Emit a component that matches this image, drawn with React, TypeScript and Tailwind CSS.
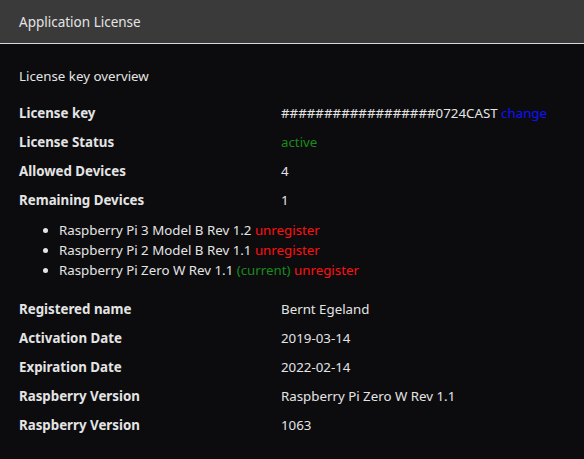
import React from "react";

interface Row {
  label: string;
  value: React.ReactNode;
}

const topRows: Row[] = [
  {
    label: "License key",
    value: (
      <>
        ##################0724CAST <span className="text-[#1010ff]">change</span>
      </>
    ),
  },
  { label: "License Status", value: <span className="text-[#1a8a1a]">active</span> },
  { label: "Allowed Devices", value: "4" },
  { label: "Remaining Devices", value: "1" },
];

const devices = [
  { name: "Raspberry Pi 3 Model B Rev 1.2", current: false },
  { name: "Raspberry Pi 2 Model B Rev 1.1", current: false },
  { name: "Raspberry Pi Zero W Rev 1.1", current: true },
];

const bottomRows: Row[] = [
  { label: "Registered name", value: "Bernt Egeland" },
  { label: "Activation Date", value: "2019-03-14" },
  { label: "Expiration Date", value: "2022-02-14" },
  { label: "Raspberry Version", value: "Raspberry Pi Zero W Rev 1.1" },
  { label: "Raspberry Version", value: "1063" },
];

const InfoRow: React.FC<Row> = ({ label, value }) => (
  <div className="flex h-[29px] items-center">
    <div className="w-[262px] shrink-0 font-bold">{label}</div>
    <div>{value}</div>
  </div>
);

const App: React.FC = () => {
  return (
    <div
      className="min-h-[459px] w-[584px] bg-[#0c0c0f] text-[13.3px] leading-5 text-[#e4e4e4]"
      style={{ fontFamily: '"Noto Sans", "Open Sans", Arial, sans-serif' }}
    >
      <div className="flex h-[44px] items-center border-b border-[#d8d8d8] bg-[#3a3a3a] px-[19px] text-[13.5px]">
        Application License
      </div>

      <div className="px-[19px] pt-[22px]">
        <div className="mb-[12px]">License key overview</div>

        {topRows.map((r) => (
          <InfoRow key={r.label} {...r} />
        ))}

        <ul className="mb-[14px] mt-[6px] list-disc pl-[40px]">
          {devices.map((d) => (
            <li key={d.name} className="h-5">
              {d.name}{" "}
              {d.current && <span className="text-[#1a8a1a]">(current) </span>}
              <span className="text-[#ff1010]">unregister</span>
            </li>
          ))}
        </ul>

        {bottomRows.map((r, i) => (
          <InfoRow key={i} {...r} />
        ))}
      </div>
    </div>
  );
};

export default App;
